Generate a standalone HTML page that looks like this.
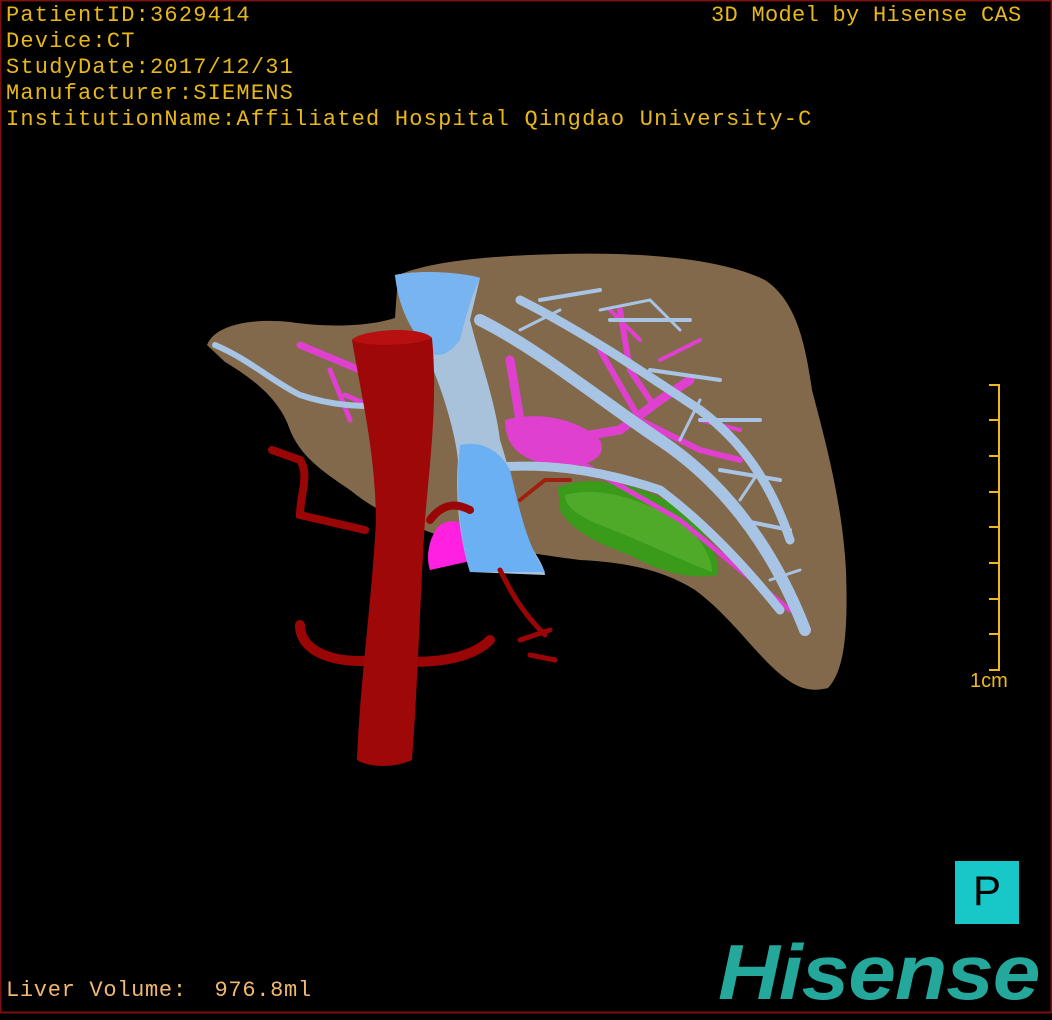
<!DOCTYPE html>
<html><head><meta charset="utf-8"><style>
html,body{margin:0;padding:0;background:#000;}
#f{position:relative;width:1052px;height:1020px;overflow:hidden;background:#000;}
.t{position:absolute;font-family:"Liberation Mono",monospace;font-size:22px;color:#e8b818;white-space:pre;letter-spacing:1.2px;line-height:26px;}
</style></head><body><div id="f">
<svg width="1052" height="1020" style="position:absolute;left:0;top:0">
<rect x="0.5" y="0.5" width="1051" height="1012" fill="none" stroke="#7a1010" stroke-width="2"/>
<path d="M207,345 C215,325 250,318 290,322 C330,328 370,326 395,318 L398,275 C430,262 480,256 560,254 C640,252 720,258 765,280 C795,300 805,340 812,390 C825,440 842,500 846,570 C848,630 845,670 828,688 C805,694 790,684 770,665 C745,640 725,612 695,590 C660,568 620,562 580,560 C540,555 500,548 460,542 C420,530 380,515 350,490 C320,470 300,455 290,430 C280,400 255,380 225,362 Z" fill="#82694b"/>
<path d="M558,488 C580,475 640,480 680,510 C705,530 720,555 718,575 C690,580 660,572 630,555 C600,545 570,530 560,510 Z" fill="#3a9a1a"/>
<path d="M565,495 C600,485 650,500 690,530 C705,545 712,560 712,572 C680,560 640,540 600,525 C575,515 565,505 565,495 Z" fill="#58b030" opacity=".7"/>
<g stroke="#e040d0" stroke-linecap="round" fill="none">
<path d="M300,345 L360,370 L400,400" stroke-width="7"/>
<path d="M330,370 L350,420 M345,395 L380,410" stroke-width="5"/>
<path d="M510,360 L520,420 L560,440 L620,430 L660,400 L690,380" stroke-width="9"/>
<path d="M620,310 L630,370 L650,400 M600,350 L640,420 L700,450 L740,460" stroke-width="6"/>
<path d="M560,450 L610,480 L680,520 L740,570 L790,610" stroke-width="5"/>
<path d="M660,360 L700,340 M640,340 L610,310 M700,420 L740,430" stroke-width="4"/>
</g>
<path d="M505,420 C540,410 580,420 600,440 C610,460 580,470 550,465 C525,460 505,450 505,420 Z" fill="#e040d0"/>
<path d="M440,525 C460,515 470,525 475,560 L430,570 C425,555 430,535 440,525 Z" fill="#ff20e0"/>
<g stroke="#a8c4e4" stroke-linecap="round" fill="none">
<path d="M215,345 C250,360 270,380 300,395 C330,405 360,408 400,405" stroke-width="6"/>
<path d="M480,320 C540,350 600,400 660,440 C720,480 770,540 805,630" stroke-width="12"/>
<path d="M520,300 C580,330 640,370 700,410 C740,440 770,480 790,540" stroke-width="9"/>
<path d="M470,470 C540,460 600,470 660,490 C700,520 740,560 780,610" stroke-width="9"/>
<path d="M540,300 L600,290 M610,320 L690,320 M650,370 L720,380 M700,420 L760,420 M720,470 L780,480 M740,520 L790,530" stroke-width="4"/>
<path d="M600,310 L650,300 L680,330 M520,330 L560,310 M680,440 L700,400 M740,500 L760,470 M770,580 L800,570" stroke-width="3"/>
</g>
<path d="M395,275 C420,270 460,272 480,278 L470,320 C480,360 495,400 500,440 C510,470 520,520 530,545 C540,560 545,570 545,575 L470,572 C460,540 455,500 458,460 C455,430 440,380 420,340 C405,320 398,300 395,275 Z" fill="#a9c2dc"/>
<path d="M395,275 C420,270 460,272 480,278 C470,300 465,320 460,340 C445,360 430,360 420,340 C405,320 398,300 395,275 Z" fill="#78b4f0"/>
<path d="M460,445 C480,440 500,450 510,470 C520,510 525,540 545,572 L470,572 C460,540 455,490 460,445 Z" fill="#6cb0f4"/>
<g stroke="#9a0606" stroke-linecap="round" fill="none">
<path d="M272,450 L300,460 C310,475 300,495 300,515 L365,530" stroke-width="8"/>
<path d="M300,625 C300,650 330,665 380,660 C430,665 470,660 490,640" stroke-width="10"/>
<path d="M430,520 C445,500 460,505 470,510" stroke-width="8"/>
<path d="M500,570 C510,590 520,610 545,635 M520,640 L550,630 M530,655 L555,660" stroke-width="5"/>
<path d="M520,500 L545,480 L570,480" stroke-width="4" stroke="#a02010"/>
</g>
<path d="M352,340 C360,330 420,325 432,338 C438,400 430,460 425,520 C420,600 418,680 412,760 C395,768 370,768 357,760 C360,680 372,600 376,520 C375,450 362,400 352,340 Z" fill="#9e0808"/>
<path d="M352,340 C360,330 420,325 432,338 C420,345 365,348 352,340 Z" fill="#b81010"/>
</svg>
<div class="t" style="left:6px;top:3px">PatientID:3629414
Device:CT
StudyDate:2017/12/31
Manufacturer:SIEMENS
InstitutionName:Affiliated Hospital Qingdao University-C</div>
<div class="t" style="left:711px;top:3px;letter-spacing:0.3px">3D Model by Hisense CAS</div>
<div class="t" style="left:6px;top:978px;color:#f0b870;letter-spacing:0.7px">Liver Volume:  976.8ml</div>
<div style="position:absolute;left:998px;top:384px;width:2px;height:287px;background:#f0b818"></div>
<div style="position:absolute;left:989px;top:384px;width:10px;height:2px;background:#f0b818"></div>
<div style="position:absolute;left:989px;top:419px;width:10px;height:2px;background:#f0b818"></div>
<div style="position:absolute;left:989px;top:455px;width:10px;height:2px;background:#f0b818"></div>
<div style="position:absolute;left:989px;top:491px;width:10px;height:2px;background:#f0b818"></div>
<div style="position:absolute;left:989px;top:526px;width:10px;height:2px;background:#f0b818"></div>
<div style="position:absolute;left:989px;top:562px;width:10px;height:2px;background:#f0b818"></div>
<div style="position:absolute;left:989px;top:598px;width:10px;height:2px;background:#f0b818"></div>
<div style="position:absolute;left:989px;top:633px;width:10px;height:2px;background:#f0b818"></div>
<div style="position:absolute;left:989px;top:669px;width:10px;height:2px;background:#f0b818"></div>
<div style="position:absolute;left:970px;top:670px;font-family:'Liberation Sans',sans-serif;font-size:20px;color:#f0b818">1cm</div>
<div style="position:absolute;left:955px;top:861px;width:64px;height:63px;background:#18c8c8;font-family:'Liberation Sans',sans-serif;font-size:42px;color:#000;text-align:center;line-height:60px">P</div>
<div style="position:absolute;left:718px;top:930px;font-family:'Liberation Sans',sans-serif;font-weight:bold;font-style:italic;font-size:78px;color:#25a89c;letter-spacing:-1px;line-height:84px;transform:scaleX(1.1);transform-origin:0 0">Hisense</div>
</div></body></html>
